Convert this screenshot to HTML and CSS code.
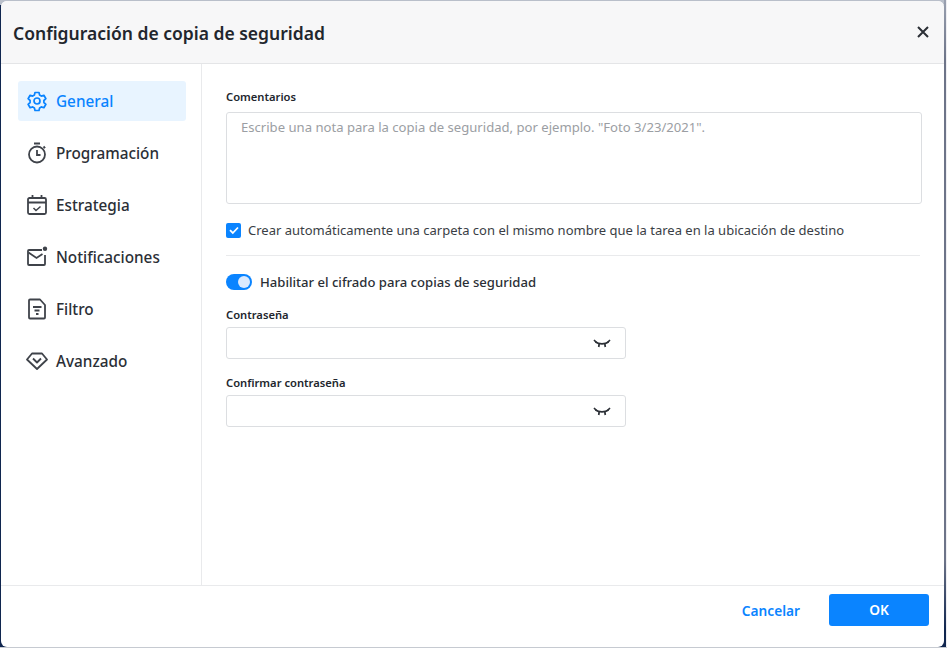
FILE: index.html
```html
<!DOCTYPE html>
<html lang="es">
<head>
<meta charset="utf-8">
<title>Configuración de copia de seguridad</title>
<link rel="stylesheet" href="styles.css">
</head>
<body>
<div class="dialog">
  <header class="head">
    <h1 class="title">Configuración de copia de seguridad</h1>
    <svg class="close" width="14" height="14" viewBox="0 0 14 14"><path d="M2 2l10 10M12 2L2 12" stroke="#2b2f36" stroke-width="2" fill="none"/></svg>
  </header>
  <div class="body">
    <nav class="side">
      <a class="item active">
        <svg class="ico" width="22" height="22" viewBox="0 0 22 22" fill="none" stroke="currentColor" stroke-width="1.7" stroke-linejoin="round"><path d="M9 2.500h4l.6 2.600 1.700 1 2.600-.8 2 3.400-2 1.800v2l2 1.800-2 3.400-2.600-.8-1.700 1-.6 2.600H9l-.6-2.600-1.700-1-2.600.8-2-3.400 2-1.800v-2l-2-1.800 2-3.400 2.600.8 1.700-1z"/><circle cx="11" cy="11" r="3"/></svg>
        <span>General</span>
      </a>
      <a class="item">
        <svg class="ico" width="22" height="22" viewBox="0 0 22 22" fill="none" stroke="currentColor" stroke-width="1.8"><path d="M8 1.500h6"/><circle cx="11" cy="12.500" r="8"/><path d="M11 8v5h3.500"/><path d="M17.500 4.500l1.600 1.600"/></svg>
        <span>Programación</span>
      </a>
      <a class="item">
        <svg class="ico" width="22" height="22" viewBox="0 0 22 22" fill="none" stroke="currentColor" stroke-width="1.8"><rect x="2" y="4" width="18" height="16" rx="1.500"/><path d="M2 8.500h18M6.500 1v4M15.500 1v4"/><path d="M7.500 14l2.500 2.500 4.500-4" stroke-width="1.500"/></svg>
        <span>Estrategia</span>
      </a>
      <a class="item">
        <svg class="ico" width="22" height="22" viewBox="0 0 22 22" fill="none" stroke="currentColor" stroke-width="1.8"><path d="M16 4H3a1 1 0 0 0-1 1v13a1 1 0 0 0 1 1h15a1 1 0 0 0 1-1V9"/><path d="M2.500 6.500L10.500 12l6-4"/><circle cx="19" cy="2.800" r="2.200" fill="currentColor" stroke="none"/></svg>
        <span>Notificaciones</span>
      </a>
      <a class="item">
        <svg class="ico" width="22" height="22" viewBox="0 0 22 22" fill="none" stroke="currentColor" stroke-width="1.8" stroke-linejoin="round"><path d="M3 2.500a1 1 0 0 1 1-1h10l5 5.500v12.500a1 1 0 0 1-1 1H4a1 1 0 0 1-1-1z"/><path d="M7 9h8.500M8.500 12.500h5M10 16h2.500"/></svg>
        <span>Filtro</span>
      </a>
      <a class="item">
        <svg class="ico" width="22" height="22" viewBox="0 0 22 22" fill="none" stroke="currentColor" stroke-width="1.8" stroke-linejoin="round"><path d="M6 3.500h10l5 6-10 9.500L1 9.500z"/><path d="M7 8.500l4 4 4-4"/></svg>
        <span>Avanzado</span>
      </a>
    </nav>
    <main class="content">
      <label class="lbl">Comentarios</label>
      <div class="area">Escribe una nota para la copia de seguridad, por ejemplo. "Foto 3/23/2021".</div>
      <div class="check-row">
        <span class="check"><svg width="14" height="14" viewBox="0 0 14 14"><path d="M3 7.200l2.800 2.800L11 4.500" stroke="#fff" stroke-width="1.800" fill="none"/></svg></span>
        <span>Crear automáticamente una carpeta con el mismo nombre que la tarea en la ubicación de destino</span>
      </div>
      <hr class="rule">
      <div class="toggle-row">
        <span class="toggle"><span class="knob"></span></span>
        <span>Habilitar el cifrado para copias de seguridad</span>
      </div>
      <label class="lbl lbl-pass">Contraseña</label>
      <div class="field">
        <svg class="eye" width="18" height="10" viewBox="0 0 18 10" fill="none" stroke="#2b2f36" stroke-width="1.700"><path d="M2.500 3c3.500 2.400 9.500 2.400 13 0"/><path d="M1 1l2.500 2.500M17 1l-2.500 2.500M6.200 5l-.5 3M11.800 5l.5 3"/></svg>
      </div>
      <label class="lbl lbl-confirm">Confirmar contraseña</label>
      <div class="field">
        <svg class="eye" width="18" height="10" viewBox="0 0 18 10" fill="none" stroke="#2b2f36" stroke-width="1.700"><path d="M2.500 3c3.500 2.400 9.500 2.400 13 0"/><path d="M1 1l2.500 2.500M17 1l-2.500 2.500M6.200 5l-.5 3M11.800 5l.5 3"/></svg>
      </div>
    </main>
  </div>
  <footer class="foot">
    <a class="cancel">Cancelar</a>
    <a class="ok">OK</a>
  </footer>
</div>
</body>
</html>
```
FILE: styles.css
```css
* { box-sizing: border-box; }
html, body { height: 100%; }
body {
  margin: 0;
  width: 947px;
  height: 648px;
  overflow: hidden;
  padding: 1px 3px 1px 1px;
  background-color: #10264f;
  background-image:
    linear-gradient(#c6cad1, #c6cad1),
    linear-gradient(#eeeef2, #eeeef2),
    linear-gradient(to bottom, #9aa1b0 0, #6d7488 60px, #6d7488 560px, #10264f 630px),
    linear-gradient(#b9bfca, #b9bfca);
  background-repeat: no-repeat;
  background-position: left bottom, right top, 944px 0, left top;
  background-size: 100% 1px, 1px 100%, 2px 100%, 100% 5px;
  font-family: "Noto Sans", "Open Sans", sans-serif;
  color: #2b2f36;
}
.dialog {
  height: 646px;
  background: #fff;
  border-radius: 6px;
  display: flex;
  flex-direction: column;
  overflow: hidden;
}
.head {
  height: 63px;
  flex: none;
  background: #f7f7f8;
  border-bottom: 1px solid #e4e5e7;
  display: flex;
  align-items: center;
  justify-content: space-between;
  padding: 0 14px 0 12px;
}
.title {
  margin: 0;
  padding-top: 2px;
  font-size: 17.5px;
  font-weight: 600;
  color: #22262d;
}
.close { display: block; }
.body { flex: 1; display: flex; min-height: 0; }
.side {
  width: 201px;
  flex: none;
  border-right: 1px solid #e9eaec;
  padding: 17px 15px 0 17px;
  display: flex;
  flex-direction: column;
  gap: 12px;
}
.item {
  height: 40px;
  display: flex;
  align-items: center;
  gap: 8px;
  padding-left: 8px;
  border-radius: 3px;
  font-size: 15.3px;
  font-weight: 500;
  color: #2b2f36;
}
.item .ico { color: #3f434a; flex: none; }
.item.active { background: #e8f4ff; color: #0a84ff; }
.item.active .ico { color: #0a84ff; }
.content { flex: 1; padding: 25px 22px 0 24px; font-size: 13px; }
.lbl {
  display: block;
  font-size: 11.2px;
  font-weight: 600;
  line-height: 16px;
  color: #22262d;
}
.area {
  margin-top: 7px;
  height: 92px;
  border: 1px solid #dcdee1;
  border-radius: 3px;
  padding: 4px 14px;
  line-height: 20px;
  color: #9b9ea3;
  font-size: 13.1px;
}
.check-row {
  margin-top: 16px;
  display: flex;
  align-items: center;
  gap: 7px;
  line-height: 20px;
  font-size: 13px;
  color: #3a3e45;
}
.check {
  width: 15px;
  height: 15px;
  border-radius: 2px;
  background: #0a84ff;
  display: flex;
  align-items: center;
  justify-content: center;
}
.rule {
  margin: 15px 2px 0 0;
  border: 0;
  border-top: 1px solid #e9eaec;
}
.toggle-row {
  margin-top: 16px;
  display: flex;
  align-items: center;
  gap: 8px;
  font-size: 13.1px;
  font-weight: 500;
  line-height: 20px;
}
.toggle {
  width: 26px;
  height: 16px;
  border-radius: 8px;
  background: #0a84ff;
  position: relative;
}
.knob {
  position: absolute;
  right: 2px;
  top: 2px;
  width: 12px;
  height: 12px;
  border-radius: 50%;
  background: #dbeafe;
}
.lbl-pass { margin-top: 15px; }
.lbl-confirm { margin-top: 16px; }
.field {
  margin-top: 4px;
  width: 400px;
  height: 32px;
  border: 1px solid #dcdee1;
  border-radius: 3px;
  display: flex;
  align-items: center;
  justify-content: flex-end;
  padding: 2px 14px 0 0;
}
.foot {
  height: 62px;
  flex: none;
  border-top: 1px solid #e9eaec;
  display: flex;
  align-items: flex-start;
  justify-content: flex-end;
  gap: 29px;
  padding: 8px 15px 0 0;
}
.cancel {
  font-size: 13.7px;
  font-weight: 600;
  color: #0a84ff;
  line-height: 33px;
}
.ok {
  width: 100px;
  height: 32px;
  border-radius: 3px;
  background: #0a84ff;
  color: #fff;
  font-size: 13.7px;
  font-weight: 600;
  line-height: 32px;
  text-align: center;
}
```
